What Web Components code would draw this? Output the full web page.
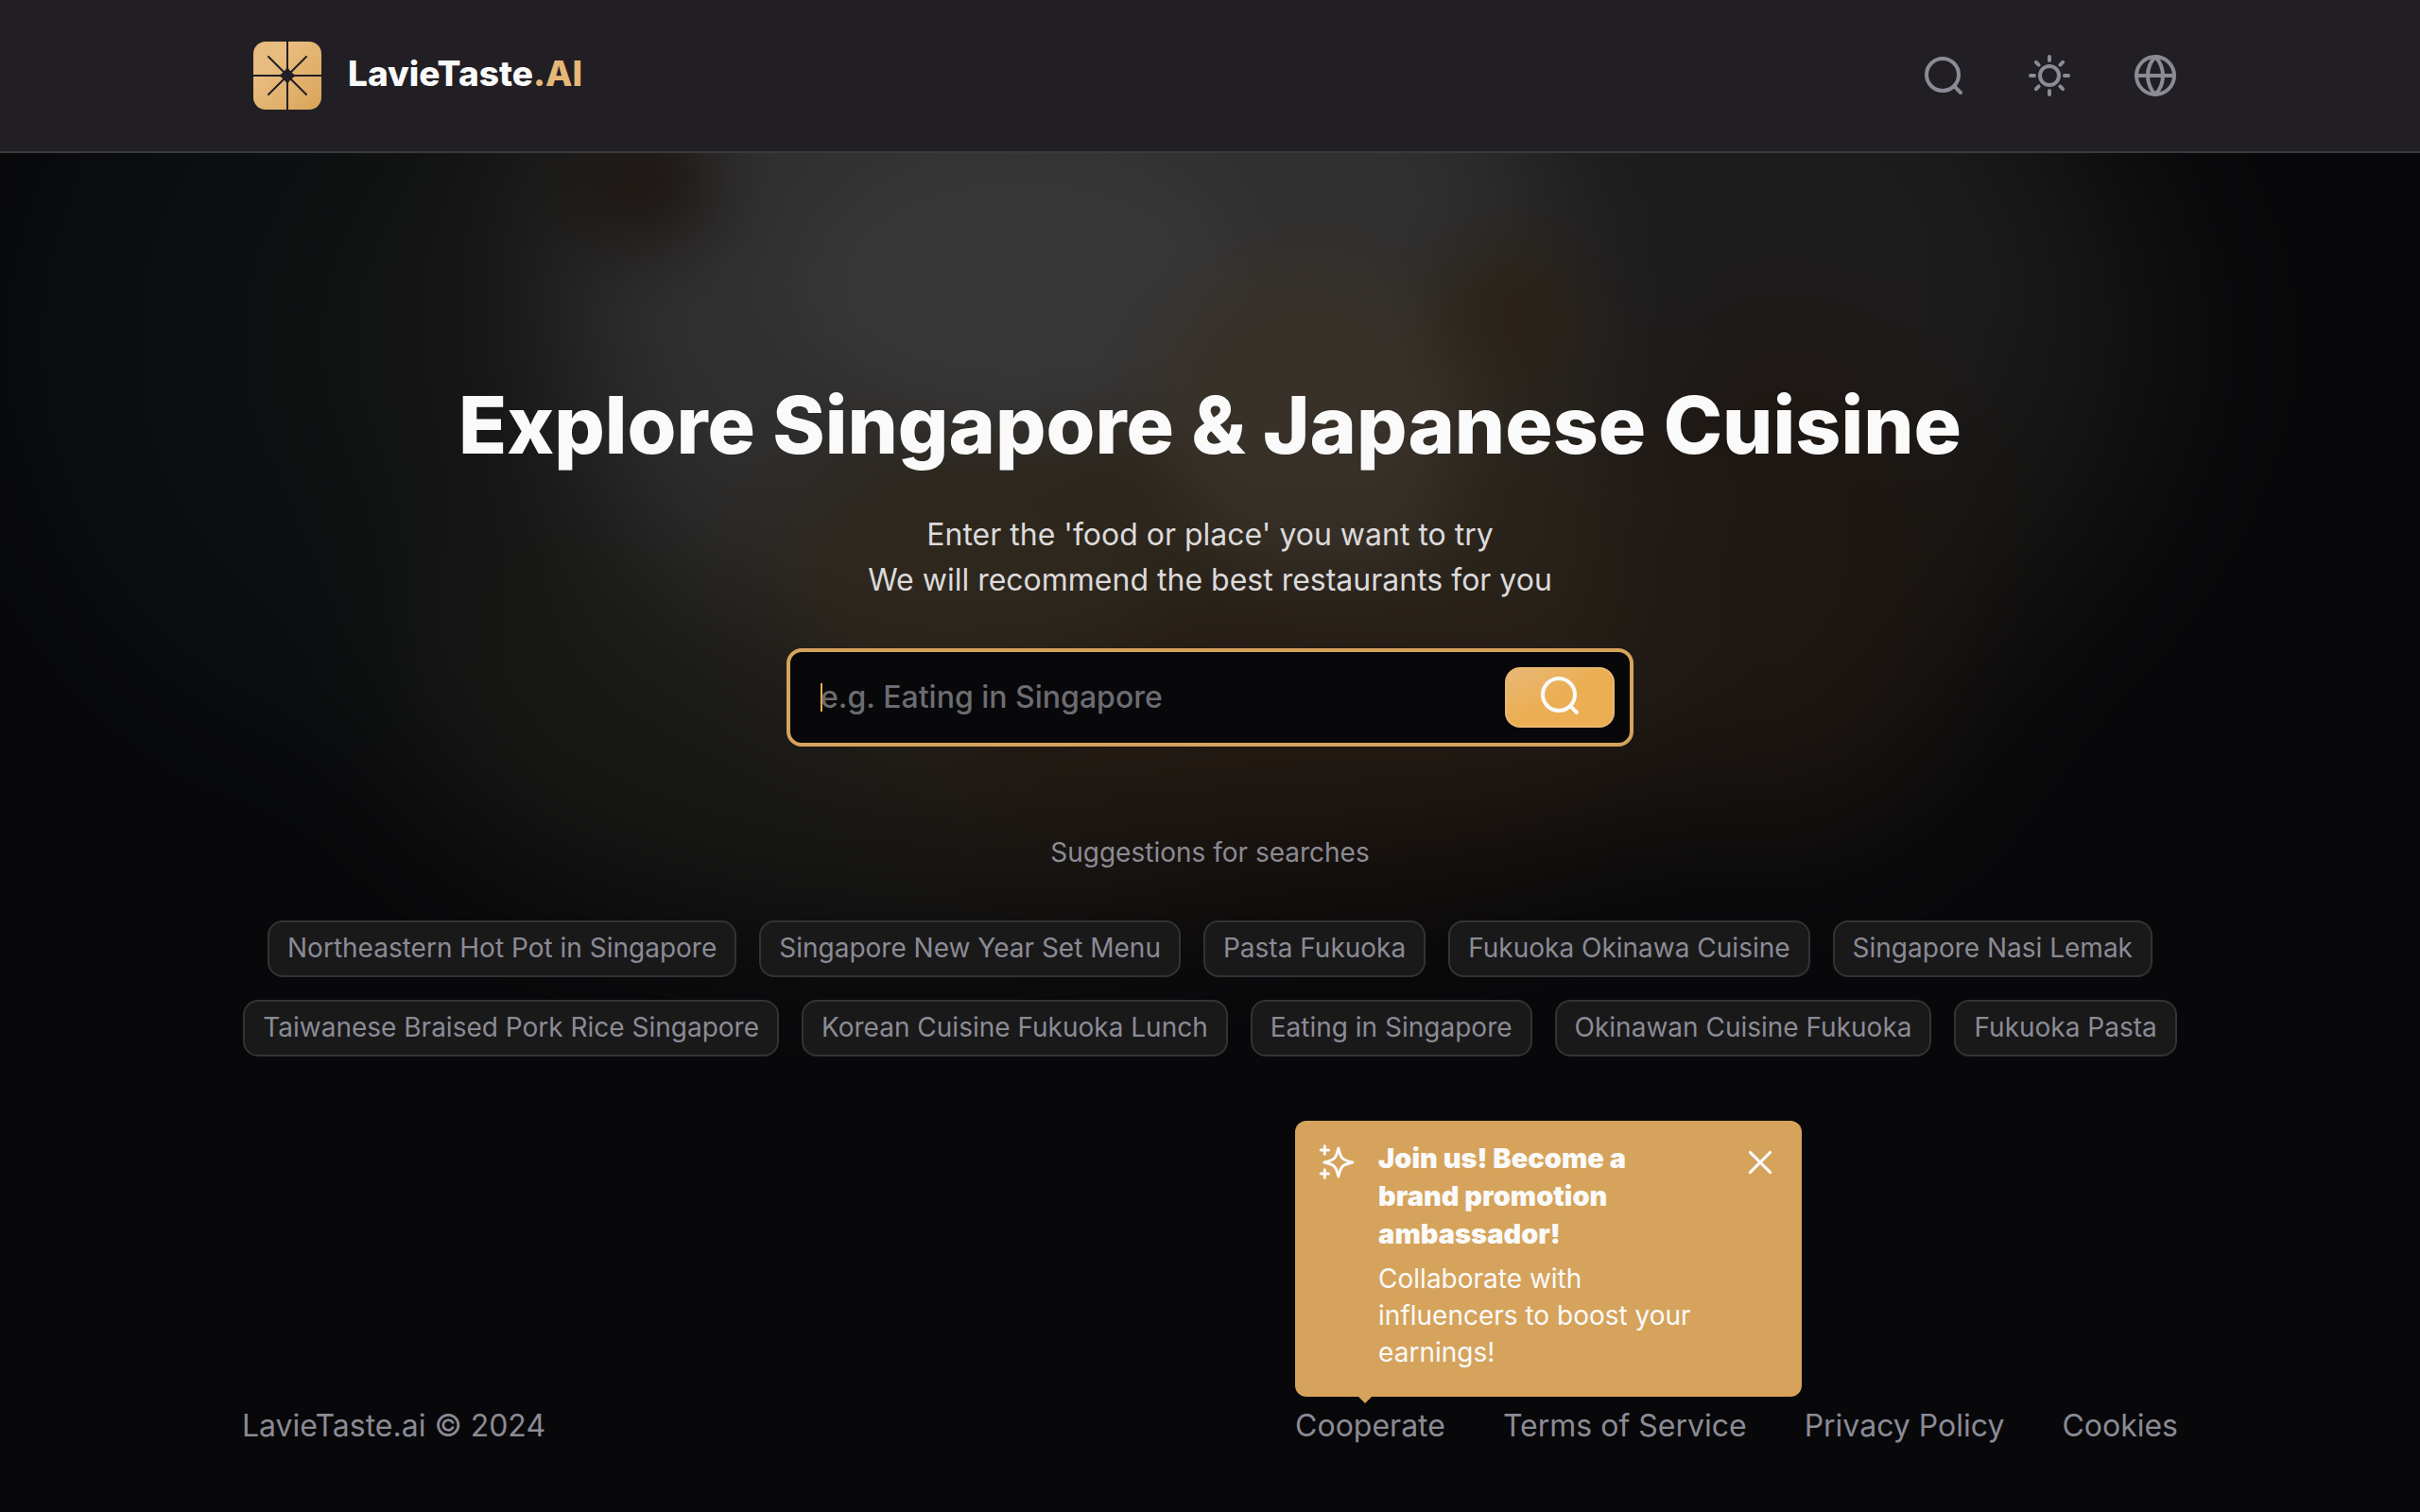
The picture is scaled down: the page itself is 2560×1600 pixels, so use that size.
<!DOCTYPE html>
<html lang="en">
<head>
<meta charset="utf-8">
<meta name="viewport" content="width=device-width, initial-scale=1">
<title>LavieTaste.AI</title>
<style>
  body {
    margin: 0;
    background: #08080a;
    color: #fafafa;
    font-family: Inter, "Liberation Sans", sans-serif;
    font-size: 32px;
    line-height: 48px;
    --accent: #d6a35c;
    --muted: #8b8b95;
    --line: #333335;
  }
</style>
</head>
<body>
<lavie-page></lavie-page>

<script>
const makeTemplate = (html) => {
  const template = document.createElement("template");
  template.innerHTML = html;
  return template;
};

class LavieElement extends HTMLElement {
  constructor() {
    super();
    const shadow = this.attachShadow({ mode: "open" });
    shadow.append(this.constructor.template.content.cloneNode(true));
  }
}

// icons, all on a 24 unit grid
const icons = {
  search: `<circle cx="11.5" cy="11.5" r="8.5"/><path d="M17.6 17.6 21 21"/>`,
  sun: `<circle cx="12" cy="12" r="5"/><path d="M12 2v2M12 20v2M4.93 4.93l1.41 1.41M17.66 17.66l1.41 1.41M2 12h2M20 12h2M6.34 17.66l-1.41 1.41M19.07 4.93l-1.41 1.41"/>`,
  globe: `<circle cx="12" cy="12" r="10"/><path d="M12 2a14.5 14.5 0 0 0 0 20a14.5 14.5 0 0 0 0-20M2 12h20"/>`,
  close: `<path d="M5.6 5.6l12.8 12.8M18.4 5.6L5.6 18.4"/>`,
  sparkles: `<path d="M13.1 3c1 4.2 1.5 5.5 2.6 6.4c.9 1.1 2.4 1.7 6.4 2.6c-4 .9-5.5 1.5-6.4 2.6c-1.1.9-1.6 2.2-2.6 6.4c-1-4.2-1.500-5.500-2.600-6.400c-.9-1.100-2.400-1.700-6.400-2.600c4-.9 5.500-1.500 6.400-2.600c1.100-.9 1.600-2.200 2.600-6.400zM4.400 1.700v5M1.900 4.200h5M4.400 16.700v5M1.900 19.200h5"/>`,
};

class LavieIcon extends LavieElement {
  static template = makeTemplate(/*html*/ `
    <style>
      :host { display: block; width: 48px; height: 48px; }
      svg {
        display: block;
        width: 100%;
        height: 100%;
        fill: none;
        stroke: currentColor;
        stroke-width: var(--stroke, 2);
        stroke-linecap: round;
        stroke-linejoin: round;
      }
    </style>
    <svg viewBox="0 0 24 24" aria-hidden="true"></svg>
  `);

  connectedCallback() {
    this.shadowRoot.querySelector("svg").innerHTML = icons[this.getAttribute("name")];
  }
}
customElements.define("lavie-icon", LavieIcon);

class LavieHeader extends LavieElement {
  static template = makeTemplate(/*html*/ `
    <style>
      :host {
        display: flex;
        align-items: center;
        justify-content: space-between;
        height: 160px;
        padding: 0 10%;
        background: #211f24;
        border-bottom: 2px solid #3a3a3c;
      }
      a {
        display: flex;
        align-items: center;
        gap: 28px;
        padding: 0 12px;
        color: inherit;
        font-size: 37px;
        font-weight: 800;
        text-decoration: none;
      }
      a span { padding-bottom: 4px; }
      b { color: #e6b776; font-weight: 800; }
      svg { display: block; width: 72px; height: 72px; }
      nav { display: flex; gap: 64px; }
      button {
        padding: 0;
        border: 0;
        background: none;
        color: var(--muted);
      }
    </style>
    <a href="#">
      <svg viewBox="0 0 72 72" aria-hidden="true">
        <defs>
          <linearGradient id="gold" x1="0" y1="0" x2="1" y2="1">
            <stop offset=".3" stop-color="#e8bc7f"/>
            <stop offset="1" stop-color="#d9a457"/>
          </linearGradient>
        </defs>
        <rect width="72" height="72" rx="13" fill="url(#gold)"/>
        <path d="M36 0v72M0 36h72M16 16l40 40M56 16L16 56" stroke="#211f24" stroke-width="2" stroke-linecap="round"/>
        <path d="M36 24c.5 4.500 2 7 4.500 7.500c.5 2.500 3 4 7.500 4.500c-4.500.5-7 2-7.500 4.500c-2.500.5-4 3-4.500 7.500c-.5-4.500-2-7-4.500-7.500c-.5-2.500-3-4-7.500-4.500c4.500-.5 7-2 7.500-4.500c2.500-.5 4-3 4.500-7.500z" fill="#211f24"/>
      </svg>
      <span>LavieTaste<b>.AI</b></span>
    </a>
    <nav>
      <button type="button" aria-label="Search"><lavie-icon name="search"></lavie-icon></button>
      <button type="button" aria-label="Theme"><lavie-icon name="sun"></lavie-icon></button>
      <button type="button" aria-label="Language"><lavie-icon name="globe"></lavie-icon></button>
    </nav>
  `);
}
customElements.define("lavie-header", LavieHeader);

// out of focus dish behind the hero
class LavieBackdrop extends LavieElement {
  static template = makeTemplate(/*html*/ `
    <style>
      :host { display: block; overflow: hidden; }
      svg { display: block; width: 100%; }
    </style>
    <svg viewBox="0 0 2560 1100" aria-hidden="true">
      <defs>
        <filter id="far" filterUnits="userSpaceOnUse" x="-300" y="-300" width="3160" height="1700" color-interpolation-filters="sRGB"><feGaussianBlur stdDeviation="75"/></filter>
        <filter id="near" filterUnits="userSpaceOnUse" x="-150" y="-150" width="2860" height="1400" color-interpolation-filters="sRGB"><feGaussianBlur stdDeviation="36"/></filter>
      </defs>
      <g filter="url(#near)">
        <g filter="url(#far)">
          <rect x="-300" y="-300" width="3160" height="1700" fill="#08080a"/>
          <ellipse cx="360" cy="200" rx="320" ry="400" fill="#0b0f10"/>
          <ellipse cx="1300" cy="200" rx="1000" ry="560" fill="#131413"/>
          <ellipse cx="960" cy="560" rx="540" ry="260" fill="#181816"/>
          <ellipse cx="1130" cy="150" rx="540" ry="450" fill="#303031"/>
          <ellipse cx="1900" cy="140" rx="270" ry="300" fill="#1d1c1d"/>
          <ellipse cx="1300" cy="460" rx="480" ry="270" fill="#2b241b"/>
          <ellipse cx="1890" cy="450" rx="190" ry="260" fill="#1e1712"/>
          <ellipse cx="1350" cy="640" rx="400" ry="120" fill="#211811"/>
        </g>
        <ellipse cx="680" cy="30" rx="80" ry="70" fill="#1e1814"/>
        <ellipse cx="1080" cy="140" rx="240" ry="160" fill="#363637"/>
        <ellipse cx="1380" cy="260" rx="170" ry="150" fill="#37312a"/>
        <ellipse cx="1040" cy="440" rx="200" ry="90" fill="#2e271d"/>
        <ellipse cx="1600" cy="170" rx="80" ry="80" fill="#2b2319"/>
        <ellipse cx="1400" cy="390" rx="130" ry="60" fill="#362f27"/>
      </g>
    </svg>
  `);
}
customElements.define("lavie-backdrop", LavieBackdrop);

class LavieSearch extends LavieElement {
  static template = makeTemplate(/*html*/ `
    <style>
      :host { display: block; width: 896px; max-width: 100%; }
      form {
        display: flex;
        align-items: center;
        box-sizing: border-box;
        height: 104px;
        padding: 0 16px 0 32px;
        border: 4px solid var(--accent);
        border-radius: 16px;
        background: #08080a;
      }
      input {
        flex: 1;
        min-width: 0;
        height: 64px;
        padding: 0 0 2px;
        border: 0;
        outline: 0;
        color: #fafafa;
        font: inherit;
        font-weight: 500;
        /* resting caret */
        background: linear-gradient(#eeae50, #eeae50) left center / 2px 30px no-repeat;
      }
      input::placeholder { color: #6c6c72; opacity: 1; }
      button {
        display: flex;
        justify-content: center;
        box-sizing: border-box;
        width: 116px;
        height: 64px;
        padding: 4px 0 0;
        border: 2px solid #e9b86f;
        border-radius: 16px;
        background: linear-gradient(150deg, #e7b878, #ecae52 50%);
        color: #fafafa;
      }
    </style>
    <form>
      <input type="text" aria-label="Food or place" placeholder="e.g. Eating in Singapore">
      <button type="button" aria-label="Search"><lavie-icon name="search"></lavie-icon></button>
    </form>
  `);
}
customElements.define("lavie-search", LavieSearch);

class LavieChip extends LavieElement {
  static template = makeTemplate(/*html*/ `
    <style>
      :host { display: block; }
      button {
        display: block;
        padding: 7px 19px 9px;
        border: 2px solid var(--line);
        border-radius: 16px;
        background: #19191a;
        color: var(--muted);
        font: inherit;
        white-space: nowrap;
      }
    </style>
    <button type="button"><slot></slot></button>
  `);
}
customElements.define("lavie-chip", LavieChip);

class LavieHero extends LavieElement {
  static template = makeTemplate(/*html*/ `
    <style>
      :host {
        display: flex;
        flex-direction: column;
        align-items: center;
        position: relative;
        padding: 240px 9% 0;
        text-align: center;
      }
      lavie-backdrop { position: absolute; inset: 0; z-index: -1; }
      h1 { margin: 0; font-size: 84px; line-height: 96px; font-weight: 800; }
      p { margin: 44px 0 48px; color: #dcdadb; }
      h2 {
        margin: 92px 0 52px;
        color: var(--muted);
        font-size: 28px;
        line-height: 40px;
        font-weight: 400;
      }
      div {
        display: flex;
        flex-wrap: wrap;
        justify-content: center;
        gap: 24px;
        font-size: 28px;
        line-height: 40px;
      }
    </style>
    <lavie-backdrop></lavie-backdrop>
    <h1>Explore Singapore &amp; Japanese Cuisine</h1>
    <p>Enter the 'food or place' you want to try<br>We will recommend the best restaurants for you</p>
    <lavie-search></lavie-search>
    <h2>Suggestions for searches</h2>
    <div>
      <lavie-chip>Northeastern Hot Pot in Singapore</lavie-chip>
      <lavie-chip>Singapore New Year Set Menu</lavie-chip>
      <lavie-chip>Pasta Fukuoka</lavie-chip>
      <lavie-chip>Fukuoka Okinawa Cuisine</lavie-chip>
      <lavie-chip>Singapore Nasi Lemak</lavie-chip>
      <lavie-chip>Taiwanese Braised Pork Rice Singapore</lavie-chip>
      <lavie-chip>Korean Cuisine Fukuoka Lunch</lavie-chip>
      <lavie-chip>Eating in Singapore</lavie-chip>
      <lavie-chip>Okinawan Cuisine Fukuoka</lavie-chip>
      <lavie-chip>Fukuoka Pasta</lavie-chip>
    </div>
  `);
}
customElements.define("lavie-hero", LavieHero);

class LavieTooltip extends LavieElement {
  static template = makeTemplate(/*html*/ `
    <style>
      :host {
        display: grid;
        grid-template-columns: 40px 334px 1fr;
        column-gap: 24px;
        align-items: start;
        box-sizing: border-box;
        width: 536px;
        padding: 20px 24px 18px;
        border-radius: 12px;
        background: var(--accent);
        color: #fafafa;
        font-size: 28px;
        line-height: 39px;
      }
      /* pointer down to the link */
      :host::after {
        content: "";
        position: absolute;
        left: 66px;
        bottom: -7px;
        width: 16px;
        height: 8px;
        background: inherit;
        clip-path: polygon(0 0, 100% 0, 50% 100%);
      }
      strong {
        display: block;
        margin-bottom: 8px;
        font-size: 29px;
        line-height: 40px;
        font-weight: 900;
      }
      p { margin: 0 0 9px; }
      lavie-icon { width: 40px; height: 40px; --stroke: 1.8; }
      .sparkles { margin-top: 4px; }
      button {
        justify-self: end;
        margin-top: 4px;
        padding: 0;
        border: 0;
        background: none;
        color: inherit;
      }
    </style>
    <lavie-icon class="sparkles" name="sparkles"></lavie-icon>
    <section>
      <strong><slot name="title"></slot></strong>
      <p><slot></slot></p>
    </section>
    <button type="button" aria-label="Close"><lavie-icon name="close"></lavie-icon></button>
  `);
}
customElements.define("lavie-tooltip", LavieTooltip);

class LavieFooter extends LavieElement {
  static template = makeTemplate(/*html*/ `
    <style>
      :host {
        display: flex;
        justify-content: space-between;
        padding: 0 10% 67px;
        color: var(--muted);
      }
      nav { display: flex; gap: 61px; }
      .cooperate { position: relative; }
      a { color: inherit; text-decoration: none; }
      lavie-tooltip { position: absolute; left: 0; bottom: calc(100% + 7px); }
    </style>
    <span>LavieTaste.ai © 2024</span>
    <nav>
      <div class="cooperate">
        <a href="#">Cooperate</a>
        <lavie-tooltip>
          <span slot="title">Join us! Become a brand promotion ambassador!</span>
          Collaborate with influencers to boost your earnings!
        </lavie-tooltip>
      </div>
      <a href="#">Terms of Service</a>
      <a href="#">Privacy Policy</a>
      <a href="#">Cookies</a>
    </nav>
  `);
}
customElements.define("lavie-footer", LavieFooter);

class LaviePage extends LavieElement {
  static template = makeTemplate(/*html*/ `
    <style>
      :host {
        display: flex;
        flex-direction: column;
        min-height: 100vh;
        position: relative;
        z-index: 0;
      }
      main { flex: 1; }
    </style>
    <lavie-header></lavie-header>
    <main><lavie-hero></lavie-hero></main>
    <lavie-footer></lavie-footer>
  `);
}
customElements.define("lavie-page", LaviePage);
</script>
</body>
</html>
